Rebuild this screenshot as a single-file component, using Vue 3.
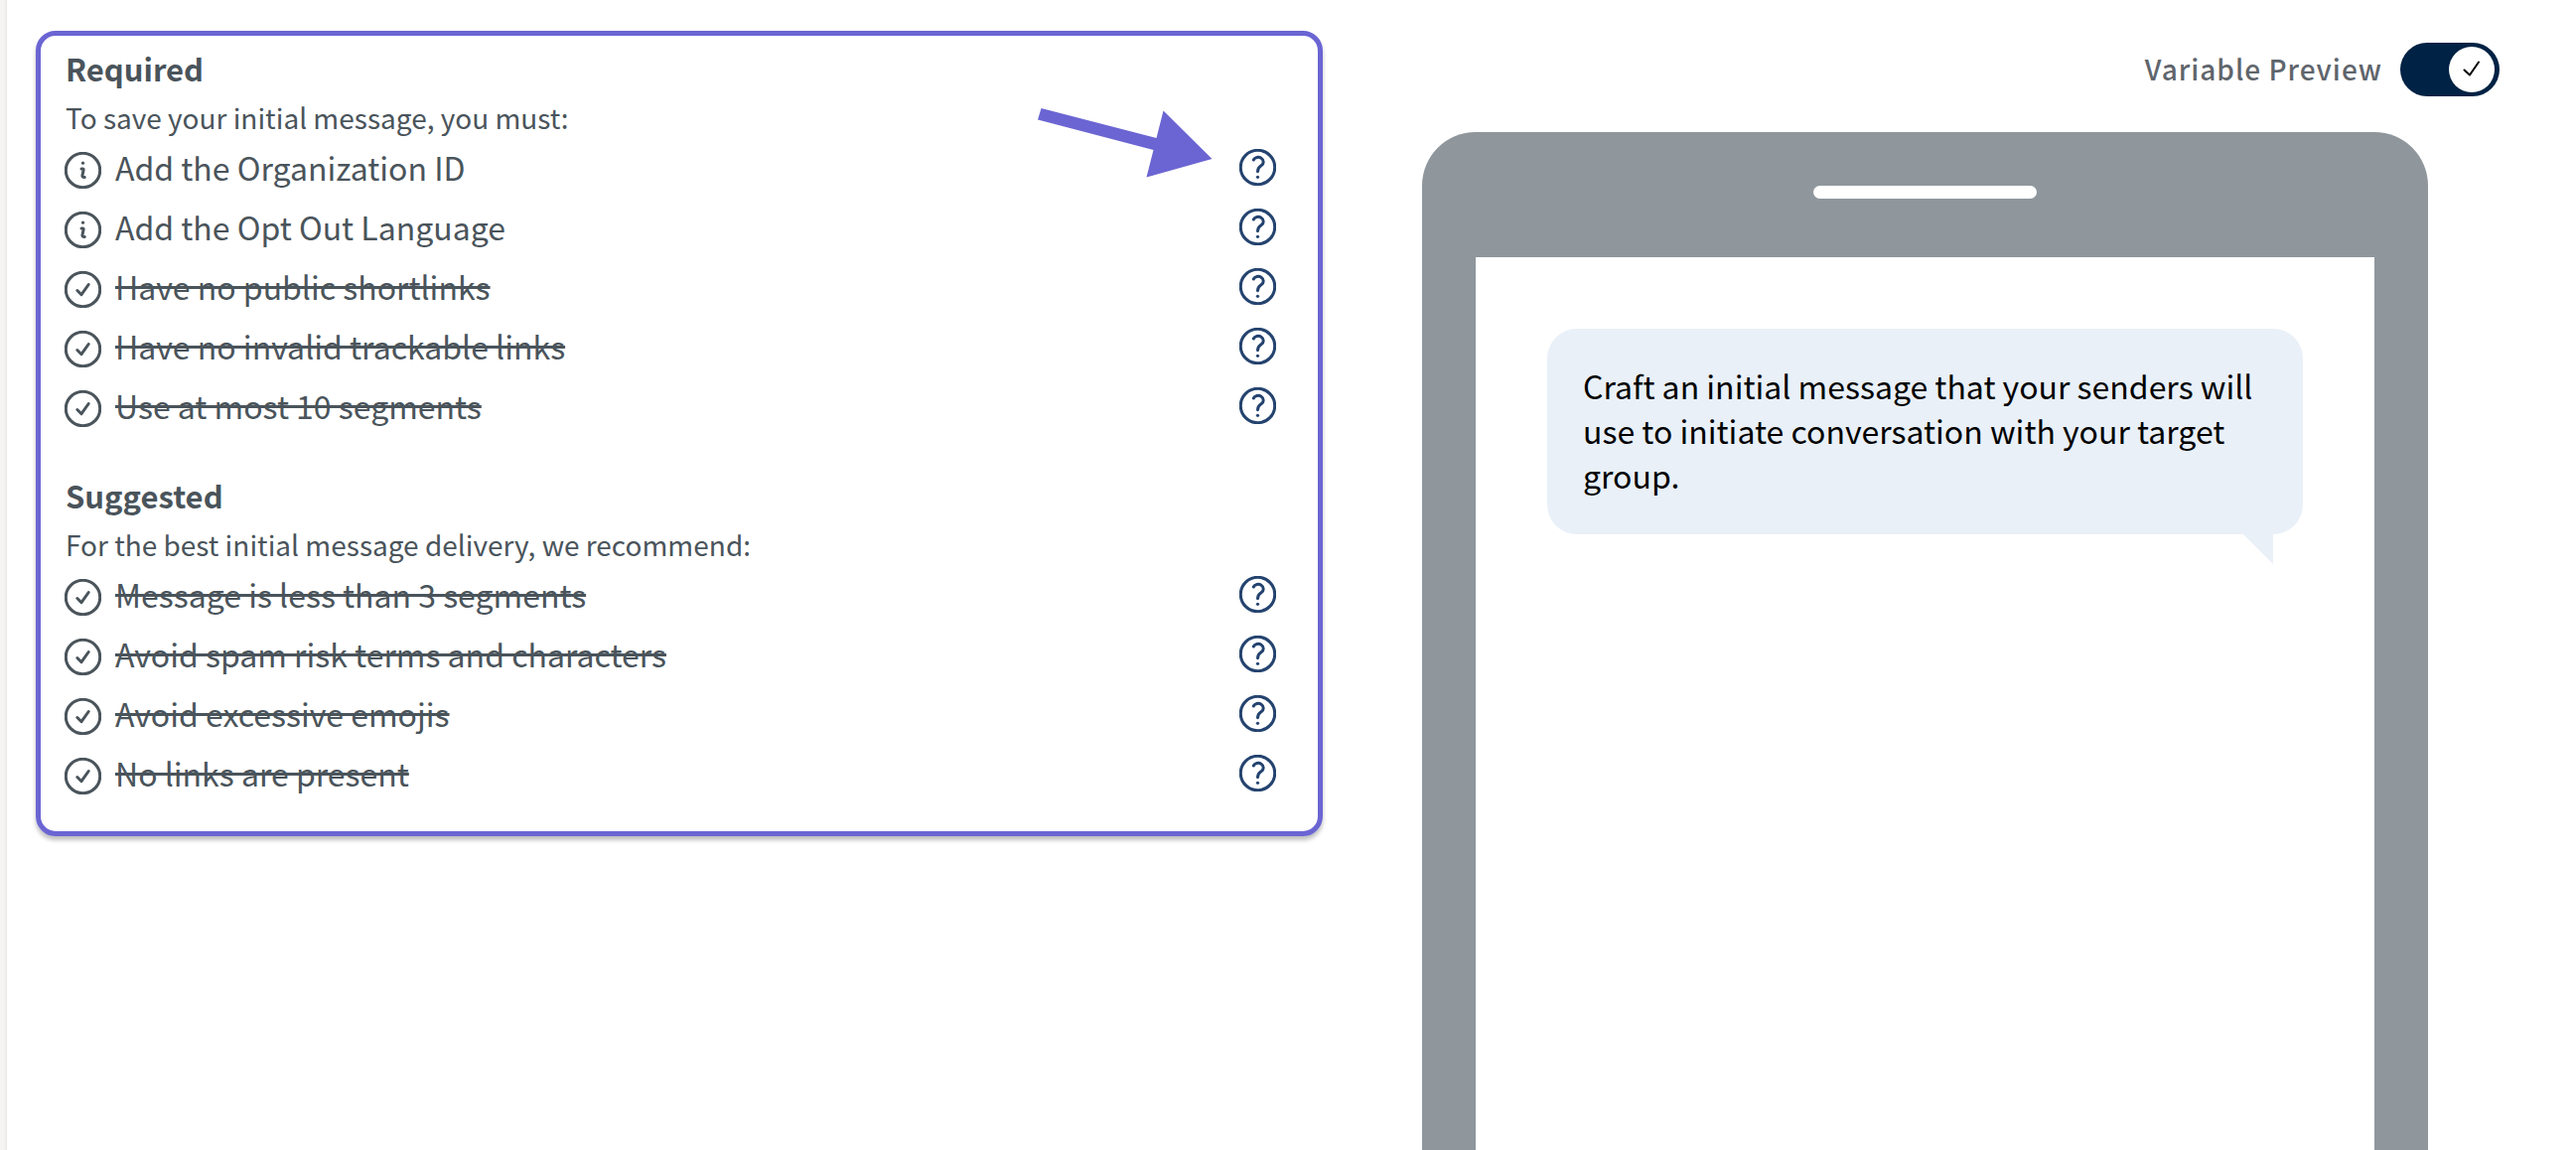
<script setup>
import { ref } from 'vue'

const previewOn = ref(true)

const sections = [
  {
    title: 'Required',
    hint: 'To save your initial message, you must:',
    items: [
      { text: 'Add the Organization ID', done: false },
      { text: 'Add the Opt Out Language', done: false },
      { text: 'Have no public shortlinks', done: true },
      { text: 'Have no invalid trackable links', done: true },
      { text: 'Use at most 10 segments', done: true },
    ],
  },
  {
    title: 'Suggested',
    hint: 'For the best initial message delivery, we recommend:',
    items: [
      { text: 'Message is less than 3 segments', done: true },
      { text: 'Avoid spam risk terms and characters', done: true },
      { text: 'Avoid excessive emojis', done: true },
      { text: 'No links are present', done: true },
    ],
  },
]
</script>

<template>
  <main class="page">
    <div class="card">
      <section v-for="section in sections" :key="section.title" class="section">
        <h2 class="title">{{ section.title }}</h2>
        <p class="hint">{{ section.hint }}</p>
        <ul class="list">
          <li v-for="item in section.items" :key="item.text" class="row">
            <svg class="status" viewBox="0 0 37 37" aria-hidden="true">
              <circle cx="18.500" cy="18.500" r="17.200" />
              <path v-if="item.done" d="M12.800 19.500l4.200 4.200L24.200 13.500" class="tick" />
              <template v-else>
                <circle cx="18.500" cy="11.200" r="1.600" class="dot" />
                <path d="M17 17H18.300Q19.400 17 19.100 18.200L17.900 23.800Q17.600 25.600 20.200 25.500" class="stem" />
              </template>
            </svg>
            <span :class="['label', { done: item.done }]">{{ item.text }}</span>
            <button type="button" class="help" :aria-label="'Help: ' + item.text">
              <svg viewBox="0 0 37 37" aria-hidden="true">
                <circle cx="18.500" cy="18.500" r="17.200" />
                <path d="M14.300 11C15.600 8.300 19.500 7.600 22 9.200C24.900 11.100 24.900 14.800 22.300 16.600C20.200 18 18.600 18.800 18.500 22.700" />
                <circle cx="18.500" cy="28.300" r="1.600" class="dot" />
              </svg>
            </button>
          </li>
        </ul>
      </section>
      <svg class="arrow" viewBox="0 0 176 70" aria-hidden="true">
        <path d="M3.500 0L0 11.500L116.500 42L109.500 69.500L175.500 51L126.500 2.500L119.500 30Z" />
      </svg>
    </div>

    <div class="preview">
      <label class="toggle">
        <span class="toggle-text">Variable Preview</span>
        <input v-model="previewOn" type="checkbox" class="toggle-input" />
        <span class="track">
          <span class="knob">
            <svg viewBox="0 0 46 46" aria-hidden="true"><path d="M15.500 23.500l5.500 5L30 15.500" /></svg>
          </span>
        </span>
      </label>
      <div class="phone">
        <div class="speaker"></div>
        <div class="screen">
          <p class="bubble">Craft an initial message that your senders will use to initiate conversation with your target group.</p>
        </div>
      </div>
    </div>
  </main>
</template>

<style>
body {
  background: #fff;
}
</style>

<style scoped>
.page {
  box-sizing: border-box;
  display: grid;
  grid-template-columns: 1296fr 1157fr;
  gap: 28px;
  min-height: 100vh;
  padding: 0 77px 0 36px;
  background: linear-gradient(to right, #f6f4f0 4px, #e9e7e3 7px, #fff 7px);
  font-family: "Noto Sans CJK SC", "Noto Sans", sans-serif;
  color: #4a545b;
}

.card {
  position: relative;
  align-self: start;
  margin-top: 31px;
  padding: 7px 42px 29px 24px;
  border: 5px solid #6b65d3;
  border-radius: 20px;
  box-shadow: 0 4px 4px rgba(0, 0, 0, 0.25);
}

.section + .section {
  margin-top: 35px;
}

.title {
  margin: 0 0 3px;
  padding-left: 1px;
  font-size: 31px;
  line-height: 52px;
  font-weight: 700;
}

.hint {
  margin: 0;
  padding-left: 1px;
  font-size: 28px;
  line-height: 40px;
}

.list {
  margin: 0;
  padding: 0;
  list-style: none;
}

.row {
  display: flex;
  align-items: center;
  height: 60px;
}

.status {
  flex: none;
  width: 37px;
  height: 37px;
  margin: 7px 14px 0 0;
  fill: none;
  stroke: #4a545b;
  stroke-width: 3;
}

.status .tick,
.status .stem {
  stroke-linecap: round;
  stroke-linejoin: round;
}

.status .dot {
  fill: #4a545b;
  stroke: none;
}

.label {
  flex: 1;
  font-size: 32px;
  line-height: 48px;
}

.label.done {
  text-decoration: line-through;
  text-decoration-thickness: 3px;
}

.help {
  flex: none;
  display: block;
  width: 37px;
  height: 37px;
  margin-top: 1px;
  padding: 0;
  border: 0;
  background: none;
  cursor: pointer;
}

.help svg {
  display: block;
  fill: none;
  stroke: #24436f;
  stroke-width: 3;
  stroke-linecap: round;
}

.help .dot {
  fill: #24436f;
  stroke: none;
}

.arrow {
  position: absolute;
  top: 73px;
  right: 106px;
  width: 176px;
  height: 70px;
  fill: #6b65d3;
}

.preview {
  display: flex;
  flex-direction: column;
}

.toggle {
  display: flex;
  align-items: center;
  align-self: flex-end;
  margin: 43px 0 36px;
  font-size: 28px;
  line-height: 50px;
  font-weight: 500;
  letter-spacing: 1px;
  color: #5f656c;
  cursor: pointer;
}

.toggle-text {
  padding-bottom: 3px;
}

.toggle-input {
  position: absolute;
  opacity: 0;
}

.track {
  box-sizing: border-box;
  display: flex;
  align-items: center;
  width: 100px;
  height: 54px;
  margin-left: 18px;
  padding: 0 5px;
  border-radius: 27px;
  background: #8f979d;
}

.toggle-input:checked + .track {
  justify-content: flex-end;
  background: #002244;
}

.knob {
  width: 46px;
  height: 46px;
  border-radius: 50%;
  background: #fff;
}

.knob svg {
  display: block;
  fill: none;
  stroke: #000;
  stroke-width: 2;
  stroke-linecap: round;
  stroke-linejoin: round;
}

.phone {
  flex: 1;
  display: flex;
  flex-direction: column;
  margin: 0 72px;
  padding: 54px 54px 0;
  border-radius: 54px 54px 0 0;
  background: #8f979d;
}

.speaker {
  align-self: center;
  width: 225px;
  height: 13px;
  margin-bottom: 59px;
  border-radius: 7px;
  background: #fff;
}

.screen {
  flex: 1;
  padding: 72px;
  background: #fff;
}

.bubble {
  position: relative;
  margin: 0;
  padding: 35px 36px 37px;
  border-radius: 30px;
  background: #e9f0f8;
  font-size: 32px;
  line-height: 45px;
  color: #000;
}

.bubble::after {
  content: "";
  position: absolute;
  top: 100%;
  right: 30px;
  border-top: 30px solid #e9f0f8;
  border-left: 30px solid transparent;
}
</style>
